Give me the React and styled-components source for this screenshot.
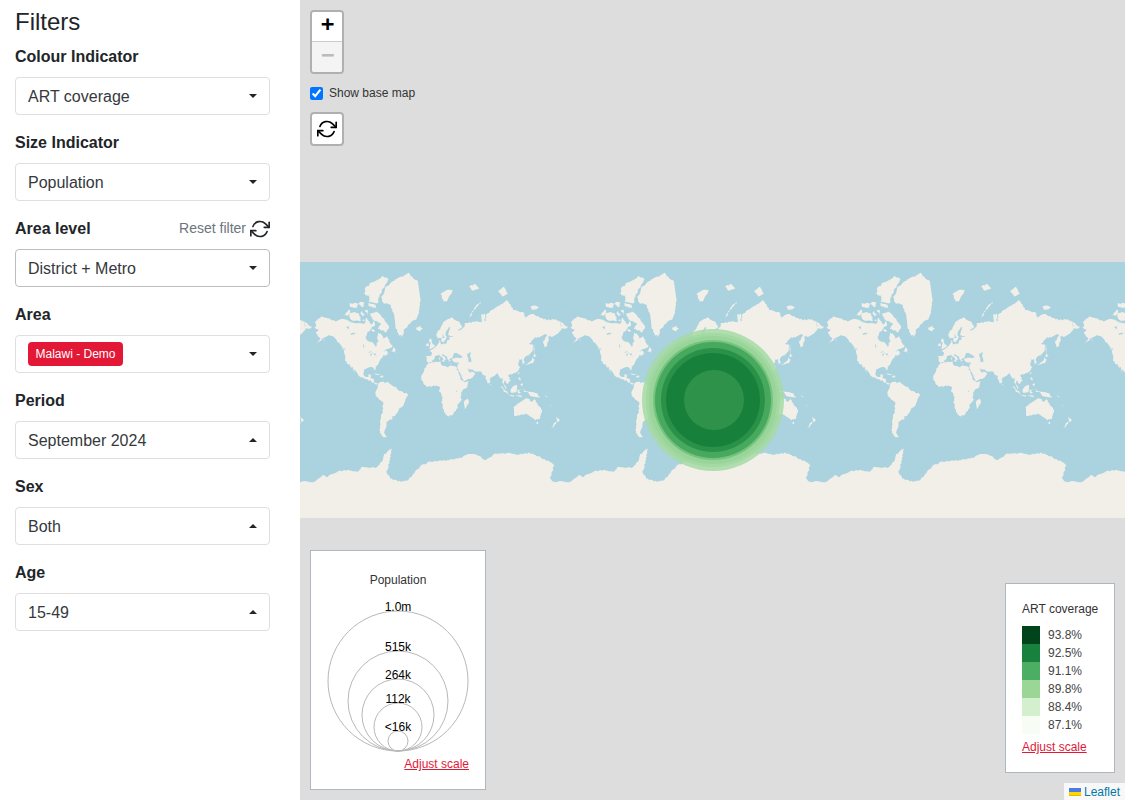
import React from "react";
import styled, { createGlobalStyle } from "styled-components";
import { FiRefreshCw } from "react-icons/fi";

const TILE = 256;

// coastlines as lon/lat, projected to a 256px web mercator tile below
const land = [
  // north america
  [[-168,65.6],[-164,66.5],[-166,68.3],[-162,70.2],[-156,71.3],[-148,70.4],[-141,69.7],[-135,69],[-128,70],[-122,69.8],[-115,68.2],[-108,68],[-102,67.8],[-96,68],[-94,71],[-90,69],[-87,67.5],[-82,69.5],[-81,67],[-87,65],[-93,62],[-94.5,59],[-92.5,57],[-85,55.3],[-82,53],[-80,51.3],[-79,54.5],[-77,56.5],[-78,59],[-77.5,62.3],[-72,61.5],[-69.5,58.8],[-65,60],[-61,56],[-56,52.5],[-60,50.2],[-66,50],[-70,47],[-65,48.7],[-64.5,46.2],[-61,45.5],[-66,44],[-70,43.5],[-70,41.7],[-74,40.5],[-76,37],[-76,35],[-81,31.5],[-80.2,27],[-80.5,25.2],[-82.5,27.5],[-84,30],[-89,30.2],[-94,29.5],[-97.5,27.5],[-97.8,22.5],[-95.5,18.7],[-91,18.5],[-90.5,21],[-87,21.5],[-88,16],[-83.5,15],[-83.5,11],[-80,9.2],[-77.5,8.7],[-79,7.5],[-81,7.5],[-85,10],[-87.5,13],[-92,14.5],[-96,16],[-102,18],[-105.5,20.5],[-108,25],[-112.5,30],[-114.8,31.5],[-110,23],[-112,25],[-115,29],[-117,32.5],[-121,34.5],[-124,40],[-124.5,48],[-128,51],[-132,55],[-138,59],[-146,61],[-152,59.5],[-158,56.5],[-164,54.6],[-158,58.5],[-162,60],[-165,62.5],[-161,64.5]],
  // south america
  [[-77.5,8.6],[-75,11],[-72,12],[-68,10.6],[-62,10.7],[-57,6],[-52,4.5],[-50,0.5],[-44,-2.5],[-37,-4.8],[-35,-7],[-39,-13.5],[-39.5,-18],[-41,-22],[-48,-25.5],[-48.5,-28],[-53,-33.5],[-57,-35],[-58,-38],[-62,-39],[-65,-41],[-65,-45],[-68,-50],[-68.5,-53],[-65,-55],[-71,-54.5],[-75,-50],[-74,-43],[-73.5,-37],[-71,-30],[-70,-18],[-76,-14],[-81,-6],[-80,-2.5],[-80,1],[-78,3],[-77.5,7]],
  // eurasia
  [[-9,37],[-9.5,39],[-9,43],[-2,43.5],[-1.5,46],[-4.5,48.5],[1.5,50.5],[4,52],[8,54],[8.5,57],[10.5,57.5],[10,54.5],[14,54],[19,54.5],[21,57],[24,58],[23,59.5],[30,60],[24,60],[21,61],[25,65.5],[22,65.7],[17.5,62],[19,60],[16.5,57],[13,55.5],[11,59],[7,58],[5,60],[5.5,62.5],[11,65],[15,68.5],[20,70],[26,71],[31,70],[41,67],[40,65],[35,64.5],[37,64],[44,66],[44,68],[54,68.5],[60,69],[68,68.8],[67,72],[73,72.5],[73,68],[75,72],[81,73.5],[87,75],[100,76.5],[104,77.7],[113,74],[127,73],[130,71],[140,72.5],[150,71],[160,69.7],[170,70],[178,69],[180,68.8],[180,65],[177,62.5],[170,60],[163,60],[162,56],[160,53],[156.5,51],[155.5,57],[160,60.5],[156,61.5],[150,59.5],[143,59],[135,54.5],[141,53],[140,48],[135,43.5],[130,42.5],[127.5,39.7],[129.5,36],[126.5,34.5],[126,37.5],[124.5,40],[121,39],[122,37],[119,35],[122,31],[120,26],[114,22.5],[108,21.5],[106,19],[109,13],[105,9],[100.5,13],[100,8],[103.5,1.5],[101,3],[98.5,8],[98,16],[94.5,16],[94,19],[91,22.5],[87,21],[80,15],[80,11],[77.5,8],[73,20],[70,21],[67,25],[61,25.2],[57,26],[56,27],[51,28],[48,30],[50,26],[52,24],[56,25],[59.5,22.5],[55,17],[45,13],[43,13],[39,21],[35,28],[34.5,31],[36,36],[30,36.2],[27,37],[26.5,40],[30,41],[37,41],[41.5,41.5],[38,44.7],[35,45],[33.5,46],[30.5,46],[28,42],[26,41],[23,40],[24,38],[22.5,36.5],[19.5,41],[19,42.5],[13.5,45.5],[12.5,44],[18.5,40],[16,38],[12,42],[9,44.3],[3,43],[0,39],[-2,36.8],[-6,36]],
  [[-180,68.5],[-175,67.5],[-170,66],[-173,64.5],[-180,65]],
  // africa
  [[-6,35.8],[10,37.2],[11,33.5],[20,31],[25,32],[32,31.2],[34,28],[37,21],[39,15],[43,11.5],[51,12],[47,4],[40,-3],[39,-10],[40.5,-15],[35,-20],[35,-24],[32.5,-27],[28,-33],[20,-34.8],[18,-32],[15,-27],[12,-17],[13.5,-10],[9,-1],[9.5,4],[5,6],[-4,5],[-8,4.5],[-13,9],[-17,14.7],[-16,20],[-13,27],[-9.5,31]],
  // australia and the pacific
  [[114,-22],[122,-18],[126,-14],[130,-12],[136,-12],[136,-15],[140,-17.5],[142,-11],[146,-19],[153,-26],[153,-31],[150,-37.5],[144,-38.5],[138,-35],[131,-31.5],[124,-33],[115,-34.5],[114,-26]],
  [[145,-41],[148,-41],[147,-43.5]],
  [[173,-35],[178.5,-38],[175,-41.5],[174,-39]],
  [[172.5,-41],[174,-42],[169,-46.5],[166.5,-46]],
  [[131,-1],[141,-2.5],[147,-6],[150.5,-10.5],[143,-9],[138,-8],[133,-4]],
  [[95,5.5],[104,-2],[106,-6],[101,-3]],
  [[105,-6],[114,-7],[114,-8.5],[106,-7.5]],
  [[115,-8],[120,-8],[125,-9],[120,-9.5]],
  [[109,1.5],[117,7],[119,1],[116,-4],[110,-3]],
  [[119.5,0],[125,1.5],[121,-1],[123,-5],[120,-5.5]],
  [[127,1],[129,0],[128,-3],[131,-3]],
  [[120,18],[122,18],[124,13],[120,14]],
  [[122,7],[126,9.5],[126,6]],
  [[130,33.5],[136,36],[140,41],[142,39],[140,35],[135,33.5]],
  [[140,42],[142,45.5],[145.5,43],[143,42]],
  [[142,54],[143.5,49],[142,46],[142,50]],
  [[120,23],[121.8,25],[121,22]],
  [[80,9.5],[82,7.5],[80.5,6]],
  [[44,-16],[49.3,-12],[50.3,-16],[47,-25],[44,-25],[43.3,-21]],
  [[164,-20],[167,-22],[166,-22.5]],
  [[156,-7],[161,-9],[160,-10]],
  // mediterranean
  [[12.5,38],[15.5,38.2],[15,36.8]],
  [[8.3,41],[9.7,41],[9.5,39],[8.5,39]],
  [[23.5,35.5],[26.3,35.2],[24,35]],
  [[32.5,35],[34.5,35.6],[33.5,34.7]],
  // arctic
  [[-73,78.2],[-66,80.8],[-55,82.2],[-35,83.5],[-22,82],[-18,77],[-20,73],[-24,70],[-32,68],[-40,65],[-43,60],[-48,61],[-52,65],[-54,69],[-55,72],[-60,76],[-70,76.5]],
  [[-80,73.5],[-72,71.5],[-67,69],[-62,66.5],[-65,62.5],[-72,64],[-78,65],[-73,68],[-85,70],[-89,72.5]],
  [[-117,70],[-105,69],[-101,69.5],[-105,73],[-117,73]],
  [[-125,72],[-118,74.3],[-116,73],[-120,71.5]],
  [[-90,77],[-78,76.5],[-75,79],[-62,82.5],[-70,83],[-90,81.5]],
  [[-92,75.7],[-80,74.7],[-80,75.8],[-90,76.5]],
  [[-117,75],[-106,75],[-106,76.5],[-117,76.3]],
  [[-104,76],[-98,75.2],[-97,76.8],[-102,77]],
  [[-96,79],[-88,78.5],[-88,81],[-95,81]],
  [[-100,73.8],[-96,72],[-98,71.3],[-102,72.5]],
  [[-96,74],[-91,72],[-92,74]],
  [[-99,69.5],[-96,68.7],[-97,69.8]],
  [[-59,47.7],[-53,46.7],[-53,49],[-56,51.5]],
  [[-87,65.5],[-81,63.5],[-85,63]],
  [[-24,65.5],[-18,66.4],[-14,65],[-18,63.5],[-22.5,64]],
  [[11,79],[20,80.3],[27,80],[20,77],[15,77]],
  [[50,81],[60,81.5],[65,80.5],[55,80]],
  [[92,80],[100,81],[105,79],[98,78.5]],
  [[137,75.5],[146,75.5],[150,75],[140,73.8]],
  [[52,71],[57,73.5],[68,76.8],[62,76],[54,73]],
  [[-5.5,50],[1.5,51.2],[1.5,52.8],[-2,56],[-3,58.6],[-6,57.5],[-3,54],[-5,52]],
  [[-10,52],[-6,52.2],[-6,55],[-10,54]],
  [[-85,22],[-80,23],[-74,20.2],[-78,20],[-82,22.2]],
  [[-74.4,18.5],[-72,20],[-68.5,18.5],[-72,18]],
  [[-128,50.5],[-123.5,48.5],[-125,50]],
  [[-154,57.8],[-152.5,58],[-153,57]],
  // antarctica, a little wider than the tile so neighbours overlap
  [[-182,-78],[-165,-78],[-155,-76],[-148,-76.5],[-135,-74.5],[-120,-74],[-105,-74.5],[-100,-72.5],[-88,-73],[-78,-73],[-72,-70],[-68,-67],[-62,-64],[-58,-63.5],[-60,-68],[-62,-72],[-65,-75],[-60,-77],[-45,-78],[-35,-77.5],[-26,-75],[-15,-72],[-5,-70.5],[10,-70],[20,-69.8],[32,-69],[40,-68.5],[50,-66.5],[60,-67],[68,-68],[72,-70],[78,-68.5],[88,-66.5],[100,-66],[110,-66.2],[120,-66.8],[135,-66],[145,-67],[155,-69],[165,-70.5],[170,-72],[165,-77],[168,-78],[182,-78],[182,-85.05],[-182,-85.05]],
];

const lakes = [
  [[47,45],[53,46.5],[53,40],[54,37],[50,37.5],[49.5,41]],
  [[-92,47],[-85,47.5],[-85,46.5],[-90,46.5]],
  [[-87.5,42],[-86,44],[-85,46],[-87.5,45]],
  [[-84,46],[-80,45],[-82,43],[-84,44]],
  [[-83,42],[-79,43],[-76,44],[-79,42.5]],
  [[-122,66],[-118,66.5],[-119,65]],
  [[-116,62],[-109,62.5],[-115,61]],
  [[-98,53.5],[-96.5,53.5],[-97,50.5]],
  [[32,0],[34,0],[34,-3],[32,-3]],
  [[14,62],[16,59],[13,59]],
];

const project = ([lon, lat]) => {
  const rad = (lat * Math.PI) / 180;
  return [
    ((lon + 180) / 360) * TILE,
    TILE / 2 - (TILE / (2 * Math.PI)) * Math.log(Math.tan(Math.PI / 4 + rad / 2)),
  ];
};

// breaks long straight edges up so the coast reads as a coast
const roughen = (points) => {
  const out = [];
  points.forEach((p, i) => {
    const q = points[(i + 1) % points.length];
    const steps = Math.max(1, Math.round(Math.hypot(q[0] - p[0], q[1] - p[1]) / 1.6));
    for (let s = 0; s < steps; s++) {
      const t = s / steps;
      const x = p[0] + (q[0] - p[0]) * t;
      const y = p[1] + (q[1] - p[1]) * t;
      const edge = y > 250 ? 0 : 0.55;
      out.push([
        x + Math.sin(x * 7.3 + y * 3.1) * edge,
        y + Math.sin(x * 4.7 - y * 6.9) * edge,
      ]);
    }
  });
  return out;
};

const toPath = (shapes) =>
  shapes
    .map(
      (s) =>
        "M" +
        roughen(s.map(project))
          .map(([x, y]) => `${x.toFixed(1)} ${y.toFixed(1)}`)
          .join("L") +
        "Z"
    )
    .join("");

const tileStarts = [49, 305, 561, 817, 1073];

const bubbles = [
  { r: 71, cx: 713, fill: "#a6daa4", opacity: 0.85 },
  { r: 67, cx: 713, fill: "#a0d79f", opacity: 0.8 },
  { r: 64, cx: 713, fill: "#98d497", opacity: 0.9 },
  { r: 60, cx: 713, fill: "#71c17c", opacity: 0.9 },
  { r: 58, cx: 713, fill: "#43a85d", opacity: 0.95 },
  { r: 52, cx: 713, fill: "#2a9149", opacity: 1 },
  { r: 47, cx: 713, fill: "#17813c", opacity: 1 },
  { r: 30, cx: 714, fill: "#2f924a", opacity: 1 },
];

const sizeRings = [
  { r: 70, label: "1.0m" },
  { r: 50, label: "515k" },
  { r: 36, label: "264k" },
  { r: 24, label: "112k" },
  { r: 10, label: "<16k" },
];

const colourStops = [
  ["#00441b", "93.8%"],
  ["#17813d", "92.5%"],
  ["#4cae62", "91.1%"],
  ["#9bd696", "89.8%"],
  ["#d3efcd", "88.4%"],
  ["#f7fcf5", "87.1%"],
];

const filters = [
  { label: "Colour Indicator", value: "ART coverage" },
  { label: "Size Indicator", value: "Population" },
  { label: "Area level", value: "District + Metro", reset: true, strong: true },
  { label: "Area", tag: "Malawi - Demo" },
  { label: "Period", value: "September 2024", up: true },
  { label: "Sex", value: "Both", up: true },
  { label: "Age", value: "15-49", up: true },
];

const App = () => {
  return (
    <Page>
      <GlobalStyle />
      <Sidebar>
        <Title>Filters</Title>
        {filters.map(({ label, value, tag, reset, strong, up }) => (
          <Field key={label}>
            <LabelRow>
              <Label>{label}</Label>
              {reset && (
                <Reset>
                  Reset filter
                  <FiRefreshCw size={20} color="#212529" />
                </Reset>
              )}
            </LabelRow>
            <Select $strong={strong}>
              {tag ? <Tag>{tag}</Tag> : <Value>{value}</Value>}
              <Caret $up={up} />
            </Select>
          </Field>
        ))}
      </Sidebar>

      <MapPane>
        <MapCanvas viewBox="300 0 825 256" width="825" height="256">
          <rect x="300" y="0" width="825" height="256" fill="#aad3df" />
          <defs>
            <g id="world">
              <path d={toPath(land)} fill="#f2efe9" />
              <path d={toPath(lakes)} fill="#aad3df" />
            </g>
          </defs>
          {tileStarts.map((x) => (
            <use key={x} href="#world" x={x} />
          ))}
          {bubbles.map(({ r, cx, fill, opacity }) => (
            <circle key={r} cx={cx} cy="138" r={r} fill={fill} opacity={opacity} />
          ))}
        </MapCanvas>

        <Controls>
          <ZoomBar>
            <ZoomButton>+</ZoomButton>
            <ZoomButton $disabled>−</ZoomButton>
          </ZoomBar>
          <BaseMapToggle>
            <input type="checkbox" defaultChecked />
            Show base map
          </BaseMapToggle>
          <ResetView>
            <FiRefreshCw size={20} color="#000" />
          </ResetView>
        </Controls>

        <SizeLegend>
          <LegendTitle $center>Population</LegendTitle>
          <svg width="144" height="164" viewBox="0 0 144 164">
            {sizeRings.map(({ r, label }) => (
              <g key={label}>
                <circle cx="71" cy={164 - r} r={r} fill="none" stroke="#b8b8b8" />
                <text
                  x="71"
                  y={164 - 2 * r}
                  textAnchor="middle"
                  fontSize="12"
                  fill="#000"
                >
                  {label}
                </text>
              </g>
            ))}
          </svg>
          <AdjustScale $right>Adjust scale</AdjustScale>
        </SizeLegend>

        <ColourLegend>
          <LegendTitle>ART coverage</LegendTitle>
          <Stops>
            {colourStops.map(([colour, label]) => (
              <Stop key={label}>
                <Swatch style={{ background: colour }} />
                {label}
              </Stop>
            ))}
          </Stops>
          <AdjustScale>Adjust scale</AdjustScale>
        </ColourLegend>

        <Attribution>
          <svg width="12" height="8" viewBox="0 0 12 8">
            <rect width="12" height="4" fill="#4C7BE1" />
            <rect y="4" width="12" height="3" fill="#FFD500" />
            <rect y="7" width="12" height="1" fill="#E0BC00" />
          </svg>
          Leaflet
        </Attribution>
      </MapPane>
    </Page>
  );
};

export default App;

const GlobalStyle = createGlobalStyle`
  html, body {
    margin: 0;
    padding: 0;
    background: #fff;
    overflow: hidden;
    font-family: "Liberation Sans", Arial, sans-serif;
    color: #212529;
  }
  * {
    box-sizing: border-box;
  }
`;

const Page = styled.div`
  display: flex;
  width: 1125px;
  height: 800px;
`;

const Sidebar = styled.div`
  width: 300px;
  flex-shrink: 0;
  padding: 8px 30px 0 15px;
`;

const Title = styled.h4`
  margin: 0 0 8px;
  font-size: 24px;
  font-weight: 500;
  line-height: 28.8px;
  color: #212529;
`;

const Field = styled.div`
  margin-bottom: 16px;
`;

const LabelRow = styled.div`
  display: flex;
  justify-content: space-between;
  align-items: center;
  height: 24px;
  margin-bottom: 8px;
`;

const Label = styled.div`
  font-size: 16px;
  font-weight: 700;
`;

const Reset = styled.div`
  display: flex;
  align-items: flex-start;
  gap: 4px;
  height: 20px;
  font-size: 14px;
  line-height: 18px;
  color: #6c757d;
`;

const Select = styled.div`
  display: flex;
  align-items: center;
  justify-content: space-between;
  height: 38px;
  padding: 0 12px;
  border: 1px solid ${(p) => (p.$strong ? "#bdbdbd" : "#dfdfdf")};
  border-radius: 4px;
  background: #fff;
  font-size: 16px;
  color: #35393d;
`;

const Value = styled.span`
  margin-top: 2px;
`;

const Tag = styled.span`
  display: flex;
  align-items: center;
  height: 24px;
  padding: 0 7.5px;
  border-radius: 4px;
  background: #e31837;
  color: #fff;
  font-size: 12px;
`;

const Caret = styled.span`
  width: 0;
  height: 0;
  border-left: 4.5px solid transparent;
  border-right: 4.5px solid transparent;
  ${(p) =>
    p.$up
      ? "border-bottom: 4.5px solid #212529;"
      : "border-top: 4.5px solid #212529;"}
`;

const MapPane = styled.div`
  position: relative;
  flex: 1;
  display: flex;
  align-items: center;
  padding-bottom: 20px;
  background: #ddd;
`;

const MapCanvas = styled.svg`
  display: block;
`;

const Controls = styled.div`
  position: absolute;
  top: 10px;
  left: 10px;
  display: flex;
  flex-direction: column;
  align-items: flex-start;
`;

const ZoomBar = styled.div`
  width: 34px;
  border: 2px solid rgba(0, 0, 0, 0.2);
  border-radius: 4px;
  background-clip: padding-box;
  overflow: hidden;
`;

const ZoomButton = styled.div`
  display: flex;
  align-items: center;
  justify-content: center;
  width: 30px;
  height: 30px;
  padding: 0 0 5px 1px;
  background: ${(p) => (p.$disabled ? "#f4f4f4" : "#fff")};
  color: ${(p) => (p.$disabled ? "#bbb" : "#000")};
  border-bottom: ${(p) => (p.$disabled ? "none" : "1px solid #ccc")};
  font-family: "DejaVu Sans Mono", monospace;
  font-size: 22px;
  font-weight: 700;
  line-height: 30px;
`;

const BaseMapToggle = styled.label`
  display: flex;
  align-items: center;
  gap: 6px;
  height: 20px;
  margin: 9px 0 9px;
  font-size: 12px;
  color: #333;

  input {
    width: 13px;
    height: 13px;
    margin: 0;
  }
`;

const ResetView = styled.div`
  display: flex;
  align-items: center;
  justify-content: center;
  width: 34px;
  height: 34px;
  border: 2px solid rgba(0, 0, 0, 0.2);
  border-radius: 4px;
  background: #fff;
  background-clip: padding-box;
`;

const LegendBox = styled.div`
  position: absolute;
  background: #fff;
  border: 1px solid #aeb7c0;
  font-size: 12px;
  color: #333;
`;

const SizeLegend = styled(LegendBox)`
  left: 10px;
  bottom: 10px;
  width: 176px;
  height: 240px;
  padding: 22px 16px 0;

  svg {
    display: block;
    margin: 0 auto;
    overflow: visible;
  }
`;

const ColourLegend = styled(LegendBox)`
  right: 10px;
  bottom: 27px;
  width: 110px;
  height: 190px;
  padding: 18px 16px 0;
`;

const LegendTitle = styled.div`
  line-height: 14px;
  white-space: nowrap;
  margin-bottom: ${(p) => (p.$center ? "0" : "10px")};
  text-align: ${(p) => (p.$center ? "center" : "left")};
`;

const Stops = styled.div`
  display: flex;
  flex-direction: column;
`;

const Stop = styled.div`
  display: flex;
  align-items: center;
  gap: 8px;
  height: 18px;
  color: #444;
`;

const Swatch = styled.span`
  width: 18px;
  height: 18px;
`;

const AdjustScale = styled.a`
  display: block;
  margin-top: 6px;
  line-height: 14px;
  color: #e31837;
  text-decoration: underline;
  text-align: ${(p) => (p.$right ? "right" : "left")};
`;

const Attribution = styled.div`
  position: absolute;
  right: 0;
  bottom: 0;
  display: flex;
  align-items: center;
  gap: 3px;
  height: 17px;
  padding: 0 5px;
  background: rgba(255, 255, 255, 0.8);
  font-size: 12px;
  color: #0078a8;
`;
